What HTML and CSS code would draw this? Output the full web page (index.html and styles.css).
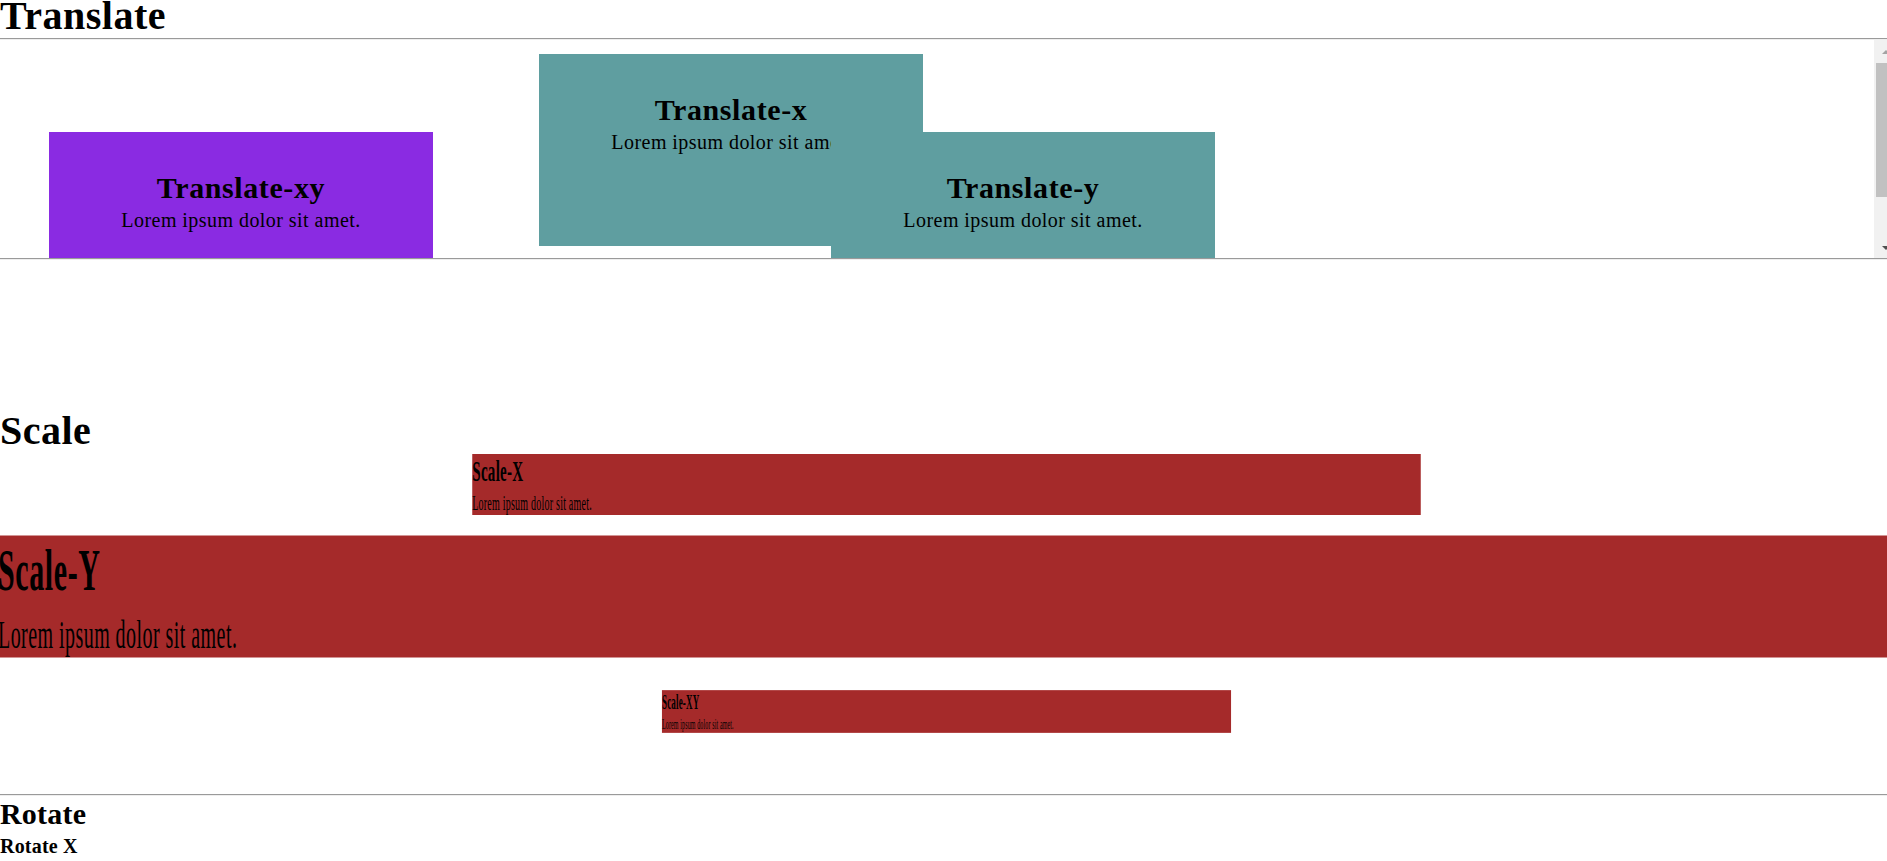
FILE: index.html
```html
<!DOCTYPE html>
<html lang="en">
<head>
<meta charset="utf-8">
<title>CSS Transforms</title>
<link rel="stylesheet" href="styles.css">
</head>
<body>
<div class="page">
  <h1 class="title title-translate">Translate</h1>
  <hr class="rule rule-top">
  <section class="translate-frame">
    <div class="translate-view">
      <div class="translate-row">
        <div class="box box-purple translate-xy">
          <h2 class="box-title">Translate-xy</h2>
          <p class="box-text">Lorem ipsum dolor sit amet.</p>
        </div>
        <div class="box box-teal translate-x">
          <h2 class="box-title">Translate-x</h2>
          <p class="box-text">Lorem ipsum dolor sit amet.</p>
        </div>
        <div class="box box-teal translate-y">
          <h2 class="box-title">Translate-y</h2>
          <p class="box-text">Lorem ipsum dolor sit amet.</p>
        </div>
      </div>
    </div>
    <div class="scrollbar">
      <div class="sb-btn"><span class="sb-arrow sb-arrow-up"></span></div>
      <div class="sb-track"><div class="sb-thumb"></div></div>
      <div class="sb-btn"><span class="sb-arrow sb-arrow-down"></span></div>
    </div>
  </section>
  <hr class="rule rule-bottom">

  <h1 class="title title-scale">Scale</h1>
  <div class="scale-block scale-x">
    <h2 class="scale-title">Scale-X</h2>
    <p class="scale-text">Lorem ipsum dolor sit amet.</p>
  </div>
  <div class="scale-block scale-y">
    <h2 class="scale-title">Scale-Y</h2>
    <p class="scale-text">Lorem ipsum dolor sit amet.</p>
  </div>
  <div class="scale-block scale-xy">
    <h2 class="scale-title">Scale-XY</h2>
    <p class="scale-text">Lorem ipsum dolor sit amet.</p>
  </div>

  <hr class="rule rule-rotate">
  <h2 class="title-rotate">Rotate</h2>
  <h4 class="title-rotate-x">Rotate X</h4>
</div>
</body>
</html>
```

FILE: styles.css
```css
html, body {
  margin: 0;
  padding: 0;
  background: #ffffff;
  overflow: hidden;
}

body {
  font-family: "Liberation Serif", "Times New Roman", Times, serif;
  color: #000000;
}

.page {
  width: 1897px;
  display: flex;
  flex-direction: column;
}

.title {
  font-size: 40px;
  font-weight: bold;
  letter-spacing: 0.5px;
  margin: 0;
}

.title-translate {
  line-height: 31px;
}

.rule {
  width: 100%;
  height: 0;
  border: none;
  border-top: 1px solid #9a9a9a;
  border-bottom: 1px solid #eeeeee;
  margin: 0;
}

.rule-top {
  margin-top: 7px;
}

/* ---------- Translate section ---------- */

.translate-frame {
  display: flex;
  height: 218px;
}

.translate-view {
  flex: 1;
  overflow: hidden;
}

.translate-row {
  display: flex;
  gap: 24px;
  padding: 14px 0 0 15px;
}

.box {
  flex: 0 0 384px;
  height: 192px;
  box-sizing: border-box;
  padding-top: 39px;
  text-align: center;
}

.box-purple {
  background: #8a2be2;
}

.box-teal {
  background: #5f9ea0;
}

.translate-xy {
  transform: translate(34px, 78px);
}

.translate-x {
  transform: translateX(116px);
}

.translate-y {
  transform: translateY(78px);
}

.box-title {
  font-size: 30px;
  line-height: 34.5px;
  letter-spacing: 0.6px;
  margin: 0;
  font-weight: bold;
}

.box-text {
  font-size: 20px;
  line-height: 23px;
  letter-spacing: 0.45px;
  margin: 3px 0 0;
}

/* fake classic scrollbar */
.scrollbar {
  flex: 0 0 23px;
  display: flex;
  flex-direction: column;
  background: #f1f1f1;
}

.sb-btn {
  height: 21px;
  display: flex;
  align-items: center;
  justify-content: center;
}

.sb-track {
  flex: 1;
  padding: 2px 2px 0;
}

.sb-thumb {
  height: 134px;
  background: #c1c1c1;
}

.sb-arrow {
  width: 0;
  height: 0;
  border-left: 4px solid transparent;
  border-right: 4px solid transparent;
}

.sb-arrow-up {
  border-bottom: 4px solid #a3a3a3;
  margin-top: 2px;
}

.sb-arrow-down {
  border-top: 4px solid #505050;
}

/* ---------- Scale section ---------- */

.title-scale {
  margin-top: 148.5px;
  line-height: 44px;
}

.scale-block {
  width: 100%;
  margin-left: -2px;
  background: #a52a2a;
}

.scale-title {
  font-size: 30px;
  line-height: 34.5px;
  letter-spacing: 0.6px;
  font-weight: bold;
  margin: 0;
}

.scale-text {
  font-size: 20px;
  line-height: 23px;
  letter-spacing: 0.45px;
  margin: 3.5px 0 0;
}

.scale-x {
  margin-top: 1.5px;
  transform: scaleX(0.5);
}

.scale-y {
  margin-top: 51px;
  transform: scaleY(2);
}

.scale-xy {
  margin-top: 54px;
  transform: scale(0.3, 0.7);
}

/* ---------- Rotate section ---------- */

.rule-rotate {
  margin-top: 52px;
}

.title-rotate {
  font-size: 30px;
  line-height: 34.5px;
  letter-spacing: 0.2px;
  font-weight: bold;
  margin: 1px 0 0;
}

.title-rotate-x {
  font-size: 20px;
  line-height: 23px;
  letter-spacing: 0.2px;
  font-weight: bold;
  margin: 3px 0 0;
}
```
